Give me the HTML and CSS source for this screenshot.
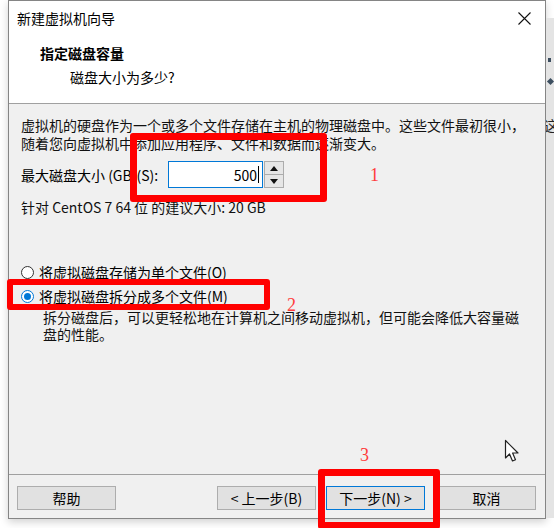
FILE: index.html
```html
<!DOCTYPE html>
<html lang="zh-CN">
<head>
<meta charset="utf-8">
<title>新建虚拟机向导</title>
<link rel="stylesheet" href="styles.css">
</head>
<body>
<div class="screen">
  <div class="dialog">
    <div class="titlebar">
      <span class="title">新建虚拟机向导</span>
      <svg class="close" width="13" height="13" viewBox="0 0 13 13"><path d="M0.5 0.5 L12.5 12.5 M12.5 0.5 L0.5 12.5" stroke="#111" stroke-width="1.1" fill="none"/></svg>
    </div>
    <div class="header">
      <div class="h-title">指定磁盘容量</div>
      <div class="h-sub">磁盘大小为多少?</div>
    </div>
    <div class="content">
      <p class="intro">虚拟机的硬盘作为一个或多个文件存储在主机的物理磁盘中。这些文件最初很小，<br>随着您向虚拟机中添加应用程序、文件和数据而逐渐变大。</p>
      <div class="spin-row">
        <span class="spin-label">最大磁盘大小 (GB)(S):</span>
        <div class="spin-input"><span class="val">500</span><span class="caret"></span></div>
        <div class="spin-btns">
          <div class="spin-btn"><svg width="8" height="5" viewBox="0 0 8 5"><path d="M0 5 L4 0 L8 5 Z" fill="#111"/></svg></div>
          <div class="spin-btn"><svg width="8" height="5" viewBox="0 0 8 5"><path d="M0 0 L4 5 L8 0 Z" fill="#111"/></svg></div>
        </div>
      </div>
      <p class="hint">针对 CentOS 7 64 位 的建议大小: 20 GB</p>
      <div class="radios">
        <label class="radio-row"><span class="radio"></span>将虚拟磁盘存储为单个文件(O)</label>
        <label class="radio-row"><span class="radio checked"></span>将虚拟磁盘拆分成多个文件(M)</label>
        <p class="desc">拆分磁盘后，可以更轻松地在计算机之间移动虚拟机，但可能会降低大容量磁<br>盘的性能。</p>
      </div>
    </div>
    <div class="footer">
      <button class="btn">帮助</button>
      <div class="btn-group">
        <button class="btn">&lt; 上一步(B)</button>
        <button class="btn primary">下一步(N) &gt;</button>
        <button class="btn cancel">取消</button>
      </div>
    </div>
  </div>
  <div class="side">
    <span class="side-dot"></span>
    <span class="side-diamond"></span>
    <span class="side-char">这</span>
  </div>

  <div class="mark mark1"></div>
  <div class="mark mark2"></div>
  <div class="mark mark3"></div>
  <span class="num num1">1</span>
  <span class="num num2">2</span>
  <span class="num num3">3</span>
  <svg class="cursor" width="17" height="24" viewBox="0 0 17 24"><path d="M1.5 1.5 L1.5 19 L5.5 15 L8.5 22 L11.5 20.7 L8.6 14 L14 14 Z" fill="#fff" stroke="#222" stroke-width="1.2" stroke-linejoin="round"/></svg>
</div>
</body>
</html>
```
FILE: styles.css
```css
* { box-sizing: border-box; }
html, body { margin: 0; padding: 0; background: #fff; }
body {
  width: 554px;
  height: 528px;
  overflow: hidden;
  font-family: "Noto Sans CJK SC", "Noto Sans", sans-serif;
  font-size: 14px;
  color: #000;
}
.screen {
  position: relative;
  width: 554px;
  height: 528px;
  display: flex;
  padding-left: 8px;
}
.dialog {
  width: 538px;
  height: 519px;
  border: 1px solid #858585;
  background: #f0f0f0;
  display: flex;
  flex-direction: column;
  box-shadow: 0 3px 8px rgba(0,0,0,0.18);
}
.titlebar {
  height: 33px;
  background: #fff;
  display: flex;
  align-items: center;
  justify-content: space-between;
  padding: 1px 14px 0 8px;
}
.title { line-height: 18px; }
.close { display: block; }
.header {
  height: 70px;
  background: #fff;
  border-bottom: 1px solid #a0a0a0;
  padding: 10px 0 0 31px;
}
.h-title { font-weight: 700; line-height: 18px; }
.h-sub { line-height: 18px; margin-top: 6px; padding-left: 30px; }
.content {
  flex: 1;
  padding: 12px 0 0 12px;
}
.intro { margin: 0; line-height: 18px; color: #111; }
.spin-row {
  display: flex;
  align-items: center;
  height: 27px;
  margin-top: 9px;
}
.spin-label { width: 147px; line-height: 18px; }
.spin-input {
  width: 95px;
  height: 27px;
  border: 1px solid #0078d7;
  background: #fff;
  display: flex;
  align-items: center;
  justify-content: flex-end;
  padding-right: 3px;
}
.val { line-height: 18px; }
.caret { width: 1px; height: 17px; background: #000; margin-left: 1px; }
.spin-btns {
  margin-left: 1px;
  width: 20px;
  height: 27px;
  display: flex;
  flex-direction: column;
}
.spin-btn {
  flex: 1;
  background: #e6e6e6;
  border: 1px solid #acacac;
  display: flex;
  align-items: center;
  justify-content: center;
}
.spin-btn + .spin-btn { border-top: none; }
.hint { margin: 10px 0 0; line-height: 18px; color: #111; }
.radios { margin-top: 44px; }
.radio-row {
  display: flex;
  align-items: center;
  height: 24px;
  line-height: 18px;
}
.radio {
  width: 13px;
  height: 13px;
  border-radius: 50%;
  border: 1px solid #333;
  background: #fff;
  margin-right: 5px;
  position: relative;
}
.radio.checked { border-color: #0078d7; }
.radio.checked::after {
  content: "";
  position: absolute;
  left: 2px; top: 2px;
  width: 7px; height: 7px;
  border-radius: 50%;
  background: #0078d7;
}
.desc { margin: 1px 0 0 22px; line-height: 17px; color: #111; }
.footer {
  height: 44px;
  border-top: 1px solid #a0a0a0;
  padding: 11px 9px 0 8px;
  display: flex;
  align-items: flex-start;
}
.btn-group { margin-left: auto; display: flex; gap: 10px; }
.btn {
  width: 99px;
  height: 24px;
  padding: 0;
  font: inherit;
  font-size: 14px;
  line-height: 18px;
  color: #000;
  background: #e1e1e1;
  border: 1px solid #adadad;
}
.btn.primary { border: 1px solid #0078d7; box-shadow: inset 0 0 0 1px #e1e1e1; }
.btn.cancel { margin-left: 2px; }
.side {
  position: relative;
  flex: 1;
  margin-top: 18px;
  height: 500px;
  background: #e4e4e4;
  overflow: hidden;
}
.side-dot { position: absolute; left: 2px; top: 40px; width: 3px; height: 4px; background: #3d4f60; }
.side-diamond { position: absolute; left: 2px; top: 61px; width: 5px; height: 5px; background: #3d4f60; transform: rotate(45deg); }
.side-char { position: absolute; left: -2px; top: 98px; font-size: 14px; line-height: 18px; color: #222; }
.mark {
  position: absolute;
  border: 7px solid #ff0000;
  border-radius: 3px;
}
.mark1 { left: 130px; top: 133px; width: 197px; height: 69px; }
.mark2 { left: 7px; top: 279px; width: 263px; height: 31px; border-width: 6px; }
.mark3 { left: 318px; top: 469px; width: 122px; height: 60px; }
.num {
  position: absolute;
  font-family: "Liberation Serif", serif;
  font-size: 18px;
  line-height: 18px;
  color: #ff3b3b;
}
.num1 { left: 370px; top: 166px; }
.num2 { left: 287px; top: 296px; }
.num3 { left: 360px; top: 446px; }
.cursor { position: absolute; left: 504px; top: 439px; }
```
